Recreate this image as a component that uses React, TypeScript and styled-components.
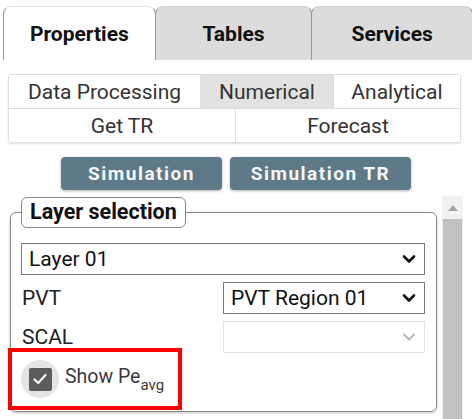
import React from 'react';
import styled, { createGlobalStyle } from 'styled-components';

const GlobalStyle = createGlobalStyle`
    html, body {
        margin: 0;
        padding: 0;
        background: #ffffff;
        overflow: hidden;
    }
    body {
        font-family: Roboto, "Liberation Sans", Arial, sans-serif;
        color: #222;
    }
`;

const Page = styled.div`
    width: 472px;
    height: 419px;
    display: flex;
    flex-direction: column;
    position: relative;
`;

const TabBar = styled.div`
    display: flex;
    padding: 6px 0 0 3px;
    height: 54px;
`;

const Tab = styled.div<{ active?: boolean; width: number }>`
    width: ${p => p.width}px;
    box-sizing: border-box;
    display: flex;
    align-items: center;
    justify-content: center;
    font-size: 21px;
    font-weight: 700;
    color: #111;
    background: ${p => (p.active ? '#ffffff' : '#dcdcdc')};
    border: 1px solid #9a9a9a;
    border-bottom: none;
    border-top-color: ${p => (p.active ? '#e4e4e4' : '#cfcfcf')};
    border-radius: 8px 8px 0 0;
    margin-right: -1px;
`;

const SubTabs = styled.div`
    margin: 14px 0 0 8px;
    width: 453px;
    box-sizing: border-box;
    border: 1px solid #dedede;
    border-radius: 3px;
    box-shadow: 0 1px 2px rgba(0, 0, 0, 0.12);
    display: flex;
    flex-direction: column;
`;

const SubRow = styled.div<{ first?: boolean }>`
    display: flex;
    height: ${p => (p.first ? 33 : 34)}px;
    border-top: ${p => (p.first ? 'none' : '1px solid #dedede')};
    box-sizing: border-box;
`;

const SubTab = styled.div<{ width?: number; selected?: boolean }>`
    ${p => (p.width ? `width: ${p.width}px;` : 'flex: 1;')}
    box-sizing: border-box;
    display: flex;
    align-items: center;
    justify-content: center;
    font-size: 21px;
    color: #333;
    background: ${p => (p.selected ? '#e2e2e2' : '#ffffff')};
    border-left: 1px solid #dedede;
    &:first-child {
        border-left: none;
    }
`;

const ButtonRow = styled.div`
    display: flex;
    justify-content: center;
    gap: 8px;
    margin-top: 14px;
`;

const ActionButton = styled.button<{ width: number }>`
    width: ${p => p.width}px;
    height: 33px;
    border: none;
    border-radius: 4px;
    background: #5e7a88;
    color: #f4f6f7;
    font-family: Roboto, "Liberation Sans", sans-serif;
    font-size: 19px;
    font-weight: 700;
    letter-spacing: 1.5px;
    box-shadow: 0 1px 3px rgba(0, 0, 0, 0.3);
    padding: 0;
`;

const Body = styled.div`
    display: flex;
    margin-top: 6px;
    flex: 1;
    min-height: 0;
`;

const Scroller = styled.div`
    width: 442px;
    padding-left: 10px;
    box-sizing: border-box;
`;

const Group = styled.fieldset`
    margin: 1px 0 0 0;
    width: 427px;
    box-sizing: border-box;
    border: 1px solid #8a8a8a;
    border-radius: 6px;
    padding: 15px 11px 6px 10px;
    box-shadow: 0 1px 3px rgba(0, 0, 0, 0.25);
    display: flex;
    flex-direction: column;
    gap: 7px;
`;

const Legend = styled.legend`
    font-size: 21.5px;
    font-weight: 700;
    color: #111;
    border: 1px solid #8a8a8a;
    border-radius: 6px;
    padding: 3px 8px 4px 8px;
    margin-left: 0;
    background: #fff;
    line-height: 22px;
`;

const SelectBox = styled.div<{ disabled?: boolean; width?: number }>`
    position: relative;
    height: 32px;
    box-sizing: border-box;
    ${p => (p.width ? `width: ${p.width}px;` : 'width: 100%;')}
    border: 1px solid ${p => (p.disabled ? '#e2e2e2' : '#767676')};
    display: flex;
    align-items: center;
    padding-left: 7px;
    font-size: 21px;
    color: #111;
    background: #fff;
`;

const Chevron = styled.svg`
    position: absolute;
    right: 8px;
    top: 50%;
    margin-top: -5px;
`;

const FieldRow = styled.div`
    display: flex;
    align-items: center;
    justify-content: space-between;
`;

const FieldLabel = styled.span`
    font-size: 21px;
    color: #222;
    padding-left: 1px;
`;

const CheckRow = styled.div`
    display: flex;
    align-items: center;
    height: 52px;
    margin-top: -7px;
`;

const Ripple = styled.div`
    width: 38px;
    height: 38px;
    border-radius: 50%;
    background: #e4e4e4;
    display: flex;
    align-items: center;
    justify-content: center;
`;

const Box = styled.div`
    width: 23px;
    height: 23px;
    border-radius: 2px;
    background: #5c5c5c;
    display: flex;
    align-items: center;
    justify-content: center;
`;

const CheckLabel = styled.span`
    margin-left: 6px;
    font-size: 19.5px;
    color: #3a3a3a;
    margin-top: -6px;
    sub {
        font-size: 15px;
        vertical-align: -7px;
        line-height: 0;
    }
`;

const Highlight = styled.div`
    position: absolute;
    left: 8px;
    top: 348px;
    width: 174px;
    height: 62px;
    box-sizing: border-box;
    border: 4px solid #ff0000;
    pointer-events: none;
`;

const ScrollTrack = styled.div`
    width: 21px;
    background: #f1f1f1;
    display: flex;
    flex-direction: column;
    align-items: center;
`;

const ScrollArrow = styled.div`
    height: 23px;
    display: flex;
    align-items: center;
    justify-content: center;
`;

const ScrollThumb = styled.div`
    width: 19px;
    flex: 1;
    background: #c1c1c1;
`;

const ChevronIcon: React.FC<{ light?: boolean }> = ({ light }) => (
    <Chevron width="14" height="10" viewBox="0 0 14 10">
        <path
            d="M2 2.5 L7 7.5 L12 2.5"
            fill="none"
            stroke={light ? '#b4b4b4' : '#111'}
            strokeWidth={light ? 1.8 : 2.6}
            strokeLinecap="round"
            strokeLinejoin="round"
        />
    </Chevron>
);

const App: React.FC = () => {
    return (
        <>
            <GlobalStyle />
            <Page>
                <TabBar>
                    <Tab active width={153}>Properties</Tab>
                    <Tab width={158}>Tables</Tab>
                    <Tab width={162}>Services</Tab>
                </TabBar>

                <SubTabs>
                    <SubRow first>
                        <SubTab width={191}>Data Processing</SubTab>
                        <SubTab width={133} selected>Numerical</SubTab>
                        <SubTab>Analytical</SubTab>
                    </SubRow>
                    <SubRow>
                        <SubTab width={226}>Get TR</SubTab>
                        <SubTab>Forecast</SubTab>
                    </SubRow>
                </SubTabs>

                <ButtonRow>
                    <ActionButton width={161}>Simulation</ActionButton>
                    <ActionButton width={181}>Simulation TR</ActionButton>
                </ButtonRow>

                <Body>
                    <Scroller>
                        <Group>
                            <Legend>Layer selection</Legend>
                            <SelectBox>
                                Layer 01
                                <ChevronIcon />
                            </SelectBox>
                            <FieldRow>
                                <FieldLabel>PVT</FieldLabel>
                                <SelectBox width={202}>
                                    PVT Region 01
                                    <ChevronIcon />
                                </SelectBox>
                            </FieldRow>
                            <FieldRow>
                                <FieldLabel>SCAL</FieldLabel>
                                <SelectBox width={202} disabled>
                                    <ChevronIcon light />
                                </SelectBox>
                            </FieldRow>
                            <CheckRow>
                                <Ripple>
                                    <Box>
                                        <svg width="18" height="18" viewBox="0 0 18 18">
                                            <path
                                                d="M3.5 9.5 L7.2 13 L14.5 5"
                                                fill="none"
                                                stroke="#fff"
                                                strokeWidth="2.2"
                                                strokeLinecap="round"
                                                strokeLinejoin="round"
                                            />
                                        </svg>
                                    </Box>
                                </Ripple>
                                <CheckLabel>
                                    Show Pe<sub>avg</sub>
                                </CheckLabel>
                            </CheckRow>
                        </Group>
                    </Scroller>
                    <ScrollTrack>
                        <ScrollArrow>
                            <svg width="10" height="6" viewBox="0 0 10 6">
                                <path d="M0 6 L5 0 L10 6 Z" fill="#a3a3a3" />
                            </svg>
                        </ScrollArrow>
                        <ScrollThumb />
                    </ScrollTrack>
                </Body>

                <Highlight />
            </Page>
        </>
    );
};

export default App;
